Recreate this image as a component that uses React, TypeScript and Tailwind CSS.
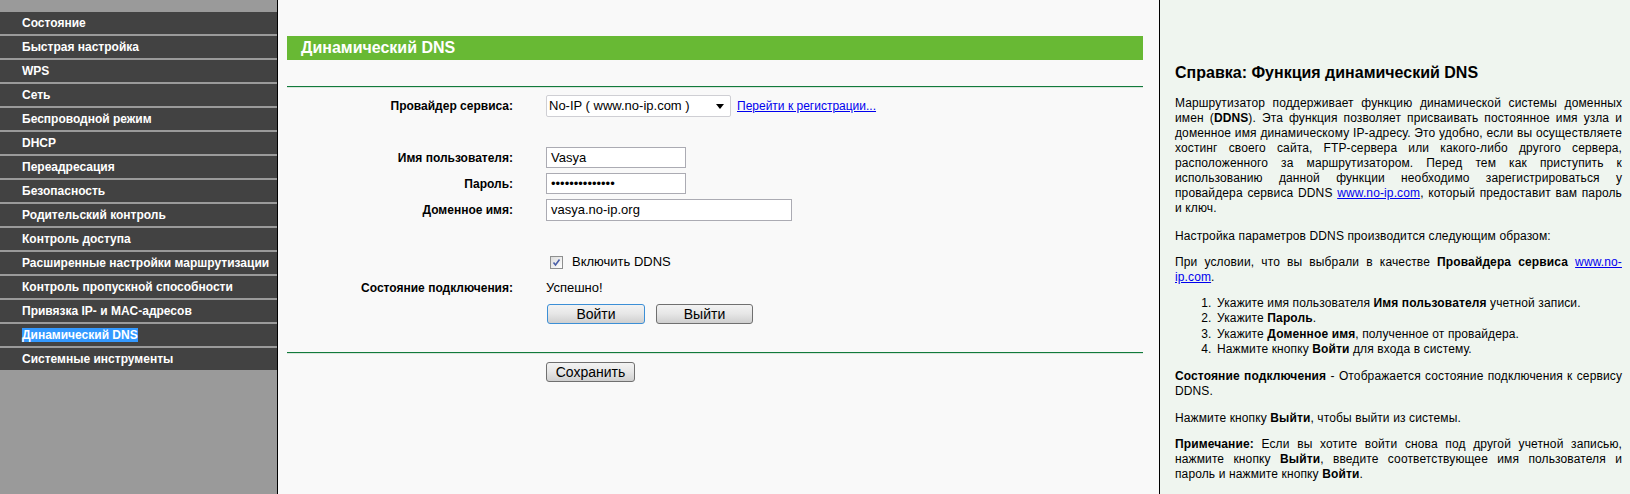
import React from "react";

const menu = [
  "Состояние",
  "Быстрая настройка",
  "WPS",
  "Сеть",
  "Беспроводной режим",
  "DHCP",
  "Переадресация",
  "Безопасность",
  "Родительский контроль",
  "Контроль доступа",
  "Расширенные настройки маршрутизации",
  "Контроль пропускной способности",
  "Привязка IP- и MAC-адресов",
  "Динамический DNS",
  "Системные инструменты",
];

function Row({ label, children, className = "" }: { label?: string; children?: React.ReactNode; className?: string }) {
  return (
    <div className={"grid grid-cols-[226px_1fr] gap-x-[33px] items-center " + className}>
      <div className="text-right font-bold text-[12px] text-black">{label}</div>
      <div className="flex items-center">{children}</div>
    </div>
  );
}

const btn =
  "h-[20px] rounded-[3px] border bg-gradient-to-b from-[#f3f3f3] via-[#e6e6e6] to-[#cfcfcf] text-[14px] leading-[16px] text-black flex items-center justify-center";

export default function App() {
  return (
    <div
      className="flex w-[1630px] h-[494px] overflow-hidden"
      style={{ fontFamily: '"Liberation Sans", Arial, sans-serif' }}
    >
      {/* Sidebar */}
      <div className="w-[278px] h-full bg-[#9a9a9a] border-r border-black shrink-0 pt-[12px]">
        <div className="flex flex-col gap-[2px] w-[277px]">
          {menu.map((m) => (
            <div key={m} className="h-[22px] bg-[#424242] flex items-center pl-[22px]">
              {m === "Динамический DNS" ? (
                <span className="bg-[#3399ff] text-white font-bold text-[12px] leading-[14px]">{m}</span>
              ) : (
                <span className="text-white font-bold text-[12px] leading-[14px]">{m}</span>
              )}
            </div>
          ))}
        </div>
      </div>

      {/* Main */}
      <div className="w-[882px] shrink-0 h-full bg-[#f9f9f9] border-r border-black pl-[9px] pr-[16px] pt-[36px]">
        <div className="h-[24px] bg-[#68b934] flex items-center pl-[14px]">
          <span className="text-white font-bold text-[16px]">Динамический DNS</span>
        </div>
        <div className="mt-[26px] h-px bg-[#127a3c]" />
        <div className="h-px bg-[#d9e6dc]" />

        <Row label="Провайдер сервиса:" className="mt-[7px] h-[22px]">
          <div className="w-[185px] h-[22px] bg-white border border-[#cfcfd4] rounded-[2px] flex items-center justify-between pl-[2px] pr-[6px]">
            <span className="text-[13px] text-black">No-IP ( www.no-ip.com )</span>
            <svg width="8" height="5" viewBox="0 0 8 5">
              <path d="M0 0h8L4 5z" fill="#000" />
            </svg>
          </div>
          <a className="ml-[6px] text-[12px] text-[#0000ee] underline cursor-pointer">Перейти к регистрации...</a>
        </Row>

        <Row label="Имя пользователя:" className="mt-[30px] h-[21px]">
          <div className="w-[140px] h-[21px] bg-white border border-[#ababb3] flex items-center pl-[4px] text-[13px] text-black">
            Vasya
          </div>
        </Row>
        <Row label="Пароль:" className="mt-[5px] h-[21px]">
          <div className="w-[140px] h-[21px] bg-white border border-[#ababb3] flex items-center pl-[4px] text-[13px] text-black">
            ••••••••••••••
          </div>
        </Row>
        <Row label="Доменное имя:" className="mt-[5px] h-[22px]">
          <div className="w-[246px] h-[22px] bg-white border border-[#ababb3] flex items-center pl-[4px] text-[13px] text-black">
            vasya.no-ip.org
          </div>
        </Row>

        <Row className="mt-[31px] h-[20px]">
          <div className="ml-[4px] w-[13px] h-[13px] border border-[#8e8f8f] bg-gradient-to-br from-[#dcdcdc] to-[#ffffff] flex items-center justify-center">
            <svg width="9" height="9" viewBox="0 0 9 9">
              <path d="M1.5 4.5 L3.5 7 L7.5 1.5" stroke="#4a5fa8" strokeWidth="1.6" fill="none" />
            </svg>
          </div>
          <span className="ml-[9px] text-[13px] text-black">Включить DDNS</span>
        </Row>

        <Row label="Состояние подключения:" className="mt-[6px] h-[20px]">
          <span className="text-[13px] text-black">Успешно!</span>
        </Row>

        <Row className="mt-[6px] h-[20px]">
          <div className="flex gap-[11px]">
            <button className={btn + " w-[98px] border-[#3c8fd6] ml-px"}>Войти</button>
            <button className={btn + " w-[97px] border-[#707070]"}>Выйти</button>
          </div>
        </Row>

        <div className="mt-[28px] h-px bg-[#127a3c]" />
        <div className="h-px bg-[#d9e6dc]" />

        <Row className="mt-[8px] h-[20px]">
          <button className={btn + " w-[89px] border-[#707070]"}>Сохранить</button>
        </Row>
      </div>

      {/* Help */}
      <div className="flex-1 h-full bg-[#eff5ef] pl-[15px] pr-[8px] pt-[63px] text-[12px] leading-[15px] text-black">
        <h2 className="font-bold text-[16px] leading-[19px] mb-[14px]">Справка: Функция динамический DNS</h2>
        <div className="tracking-[0.12px]">
          <p className="text-justify mb-[13px]">
            Маршрутизатор поддерживает функцию динамической системы доменных имен (<b>DDNS</b>). Эта функция
            позволяет присваивать постоянное имя узла и доменное имя динамическому IP-адресу. Это удобно, если вы
            осуществляете хостинг своего сайта, FTP-сервера или какого-либо другого сервера, расположенного за
            маршрутизатором. Перед тем как приступить к использованию данной функции необходимо зарегистрироваться у
            провайдера сервиса DDNS <a className="text-[#0000ee] underline">www.no-ip.com</a>, который предоставит вам
            пароль и ключ.
          </p>
          <p className="text-justify mb-[11px]">Настройка параметров DDNS производится следующим образом:</p>
          <p className="text-justify mb-[11px]">
            При условии, что вы выбрали в качестве <b>Провайдера сервиса</b>{" "}
            <a className="text-[#0000ee] underline">www.no-ip.com</a>.
          </p>
          <ol className="list-decimal pl-[40px] mb-[12px]">
            <li className="leading-[15.3px] pl-[2px]">
              Укажите имя пользователя <b>Имя пользователя</b> учетной записи.
            </li>
            <li className="leading-[15.3px] pl-[2px]">
              Укажите <b>Пароль</b>.
            </li>
            <li className="leading-[15.3px] pl-[2px]">
              Укажите <b>Доменное имя</b>, полученное от провайдера.
            </li>
            <li className="leading-[15.3px] pl-[2px]">
              Нажмите кнопку <b>Войти</b> для входа в систему.
            </li>
          </ol>
          <p className="text-justify mb-[12px]">
            <b>Состояние подключения</b> - Отображается состояние подключения к сервису DDNS.
          </p>
          <p className="text-justify mb-[11px]">
            Нажмите кнопку <b>Выйти</b>, чтобы выйти из системы.
          </p>
          <p className="text-justify">
            <b>Примечание:</b> Если вы хотите войти снова под другой учетной записью, нажмите кнопку <b>Выйти</b>,
            введите соответствующее имя пользователя и пароль и нажмите кнопку <b>Войти</b>.
          </p>
        </div>
      </div>
    </div>
  );
}
